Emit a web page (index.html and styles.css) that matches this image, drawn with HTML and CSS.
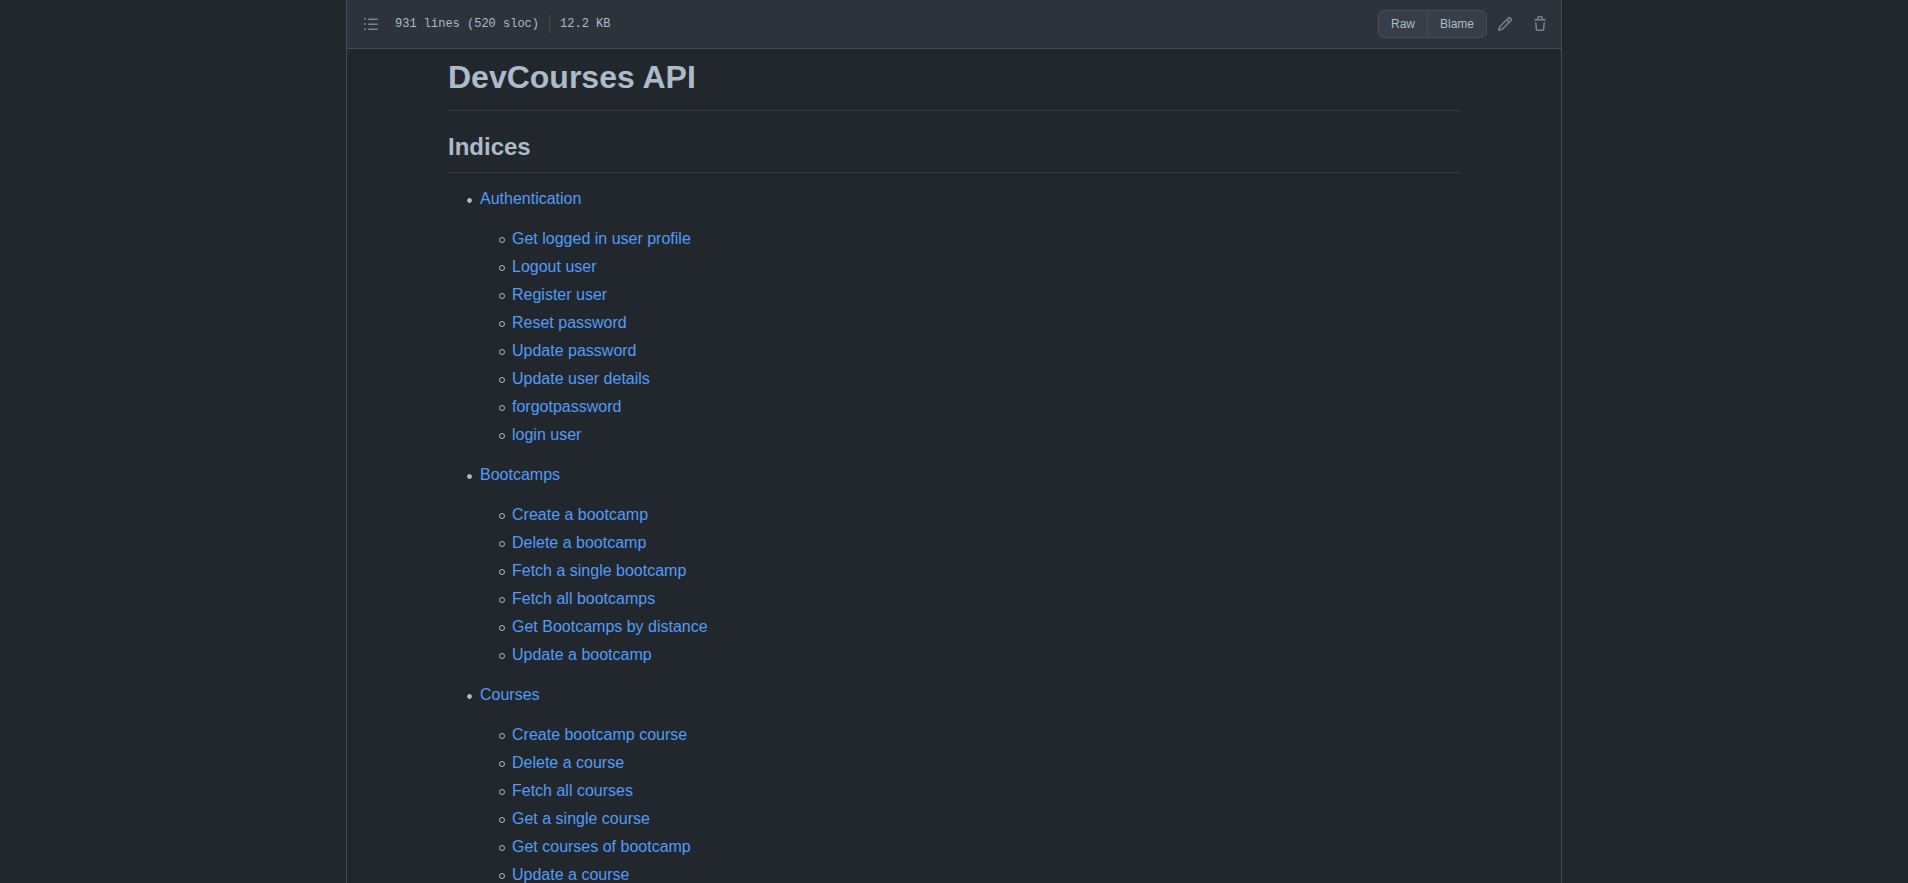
FILE: index.html
```html
<!DOCTYPE html>
<html lang="en">
<head>
<meta charset="utf-8">
<meta name="viewport" content="width=device-width, initial-scale=1">
<title>DevCourses API</title>
<link rel="stylesheet" href="styles.css">
</head>
<body>
<main class="box">
  <header class="toolbar">
    <div class="file-info">
      <button class="icon-button toc-button" type="button" aria-label="Table of contents">
        <svg width="16" height="16" viewBox="0 0 16 16" fill="currentColor" aria-hidden="true"><path fill-rule="evenodd" d="M2 4a1 1 0 100-2 1 1 0 000 2zm3.75-1.5a.75.75 0 000 1.5h8.500a.75.75 0 000-1.500h-8.500zm0 5a.75.75 0 000 1.500h8.500a.75.75 0 000-1.500h-8.500zm0 5a.75.75 0 000 1.500h8.500a.75.75 0 000-1.500h-8.500zM3 8a1 1 0 11-2 0 1 1 0 012 0zm-1 6a1 1 0 100-2 1 1 0 000 2z"/></svg>
      </button>
      <span>931 lines (520 sloc)</span>
      <span class="divider"></span>
      <span>12.2 KB</span>
    </div>
    <div class="actions">
      <div class="button-group">
        <a class="button" href="#raw">Raw</a>
        <a class="button" href="#blame">Blame</a>
      </div>
      <button class="icon-button" type="button" aria-label="Edit this file">
        <svg width="16" height="16" viewBox="0 0 16 16" fill="currentColor" aria-hidden="true"><path fill-rule="evenodd" d="M11.013 1.427a1.75 1.75 0 012.474 0l1.086 1.086a1.75 1.75 0 010 2.474l-8.610 8.610c-.210.210-.470.364-.756.445l-3.251.930a.75.75 0 01-.927-.928l.929-3.250a1.750 1.750 0 01.445-.758l8.610-8.610zm1.414 1.060a.25.25 0 00-.354 0L10.811 3.750l1.439 1.440 1.263-1.263a.25.25 0 000-.354l-1.086-1.086zM11.189 6.250L9.750 4.810l-6.286 6.287a.25.25 0 00-.064.108l-.558 1.953 1.953-.558a.249.249 0 00.108-.064l6.286-6.286z"/></svg>
      </button>
      <button class="icon-button" type="button" aria-label="Delete this file">
        <svg width="16" height="16" viewBox="0 0 16 16" fill="currentColor" aria-hidden="true"><path fill-rule="evenodd" d="M6.500 1.750a.25.25 0 01.25-.25h2.500a.25.25 0 01.25.25V3h-3V1.750zm4.500 0V3h2.250a.75.75 0 010 1.500H2.750a.75.75 0 010-1.500H5V1.750C5 .784 5.784 0 6.750 0h2.500C10.216 0 11 .784 11 1.750zM4.496 6.675a.75.75 0 10-1.492.150l.660 6.600A1.750 1.750 0 005.405 15h5.190c.900 0 1.652-.681 1.741-1.576l.660-6.600a.75.75 0 00-1.492-.149l-.660 6.600a.25.25 0 01-.249.225h-5.190a.25.25 0 01-.249-.225l-.660-6.600z"/></svg>
      </button>
    </div>
  </header>
  <article class="readme">
    <h1>DevCourses API</h1>
    <h2>Indices</h2>
    <ul class="index">
      <li><p><a href="#authentication">Authentication</a></p>
        <ul>
          <li><a href="#profile">Get logged in user profile</a></li>
          <li><a href="#logout">Logout user</a></li>
          <li><a href="#register">Register user</a></li>
          <li><a href="#reset">Reset password</a></li>
          <li><a href="#update-password">Update password</a></li>
          <li><a href="#update-details">Update user details</a></li>
          <li><a href="#forgot">forgotpassword</a></li>
          <li><a href="#login">login user</a></li>
        </ul>
      </li>
      <li><p><a href="#bootcamps">Bootcamps</a></p>
        <ul>
          <li><a href="#create-bootcamp">Create a bootcamp</a></li>
          <li><a href="#delete-bootcamp">Delete a bootcamp</a></li>
          <li><a href="#single-bootcamp">Fetch a single bootcamp</a></li>
          <li><a href="#all-bootcamps">Fetch all bootcamps</a></li>
          <li><a href="#distance">Get Bootcamps by distance</a></li>
          <li><a href="#update-bootcamp">Update a bootcamp</a></li>
        </ul>
      </li>
      <li><p><a href="#courses">Courses</a></p>
        <ul>
          <li><a href="#create-course">Create bootcamp course</a></li>
          <li><a href="#delete-course">Delete a course</a></li>
          <li><a href="#all-courses">Fetch all courses</a></li>
          <li><a href="#single-course">Get a single course</a></li>
          <li><a href="#bootcamp-courses">Get courses of bootcamp</a></li>
          <li><a href="#update-course">Update a course</a></li>
        </ul>
      </li>
    </ul>
  </article>
</main>
</body>
</html>
```
FILE: styles.css
```css
*,
*::before {
  box-sizing: border-box;
}

html {
  scrollbar-width: none;
}

body {
  margin: 0;
  padding: 0 32px;
  background: #22272e;
  color: #adbac7;
  font: 16px/24px "Liberation Sans", Arial, sans-serif;
}

.box {
  max-width: 1216px;
  min-height: 100vh;
  margin: 0 auto;
  border: 1px solid #444c56;
  border-width: 0 1px;
}

.toolbar {
  display: flex;
  align-items: center;
  justify-content: space-between;
  padding: 10px 8px 10px 11px;
  border-bottom: 1px solid #444c56;
  background: #2d333b;
  font-size: 12px;
  line-height: 20px;
}

.file-info,
.actions,
.button-group {
  display: flex;
  align-items: center;
}

.file-info {
  font-family: "Liberation Mono", monospace;
}

.toc-button {
  margin-right: 11px;
}

.divider {
  width: 1px;
  height: 18px;
  margin: 0 10px;
  background: #444c56;
}

.actions {
  gap: 5px;
}

.icon-button {
  display: flex;
  padding: 5px;
  border: 0;
  background: none;
  color: #768390;
}

.actions .icon-button + .icon-button {
  margin-left: 4px;
}

.button-group {
  border: 1px solid #444c56;
  border-radius: 6px;
  background: #373e47;
}

.button {
  padding: 3px 12px;
  color: #adbac7;
}

.button + .button {
  border-left: 1px solid #444c56;
}

a {
  color: #539bf5;
  text-decoration: none;
}

.readme {
  max-width: 1012px;
  margin: 0 auto;
  padding: 8px 0 16px;
}

h1,
h2 {
  border-bottom: 1px solid #373e47;
  font-weight: 700;
}

h1 {
  margin: 0 0 21px;
  padding-bottom: 13px;
  font-size: 32px;
  line-height: 40px;
}

h2 {
  margin: 0 0 14px;
  padding-bottom: 10px;
  font-size: 24px;
  line-height: 30px;
}

ul {
  margin: 0;
  padding-left: 32px;
  list-style: none;
}

li {
  position: relative;
}

li::before {
  content: "";
  position: absolute;
  top: 10px;
  left: -13px;
  width: 6px;
  height: 6px;
  border: 1px solid #adbac7;
  border-radius: 50%;
}

.index > li::before {
  width: 5px;
  height: 5px;
  top: 11px;
  background: #adbac7;
}

li + li {
  margin-top: 4px;
}

.index > li + li {
  margin-top: 16px;
}

p {
  margin: 0 0 16px;
}
```
